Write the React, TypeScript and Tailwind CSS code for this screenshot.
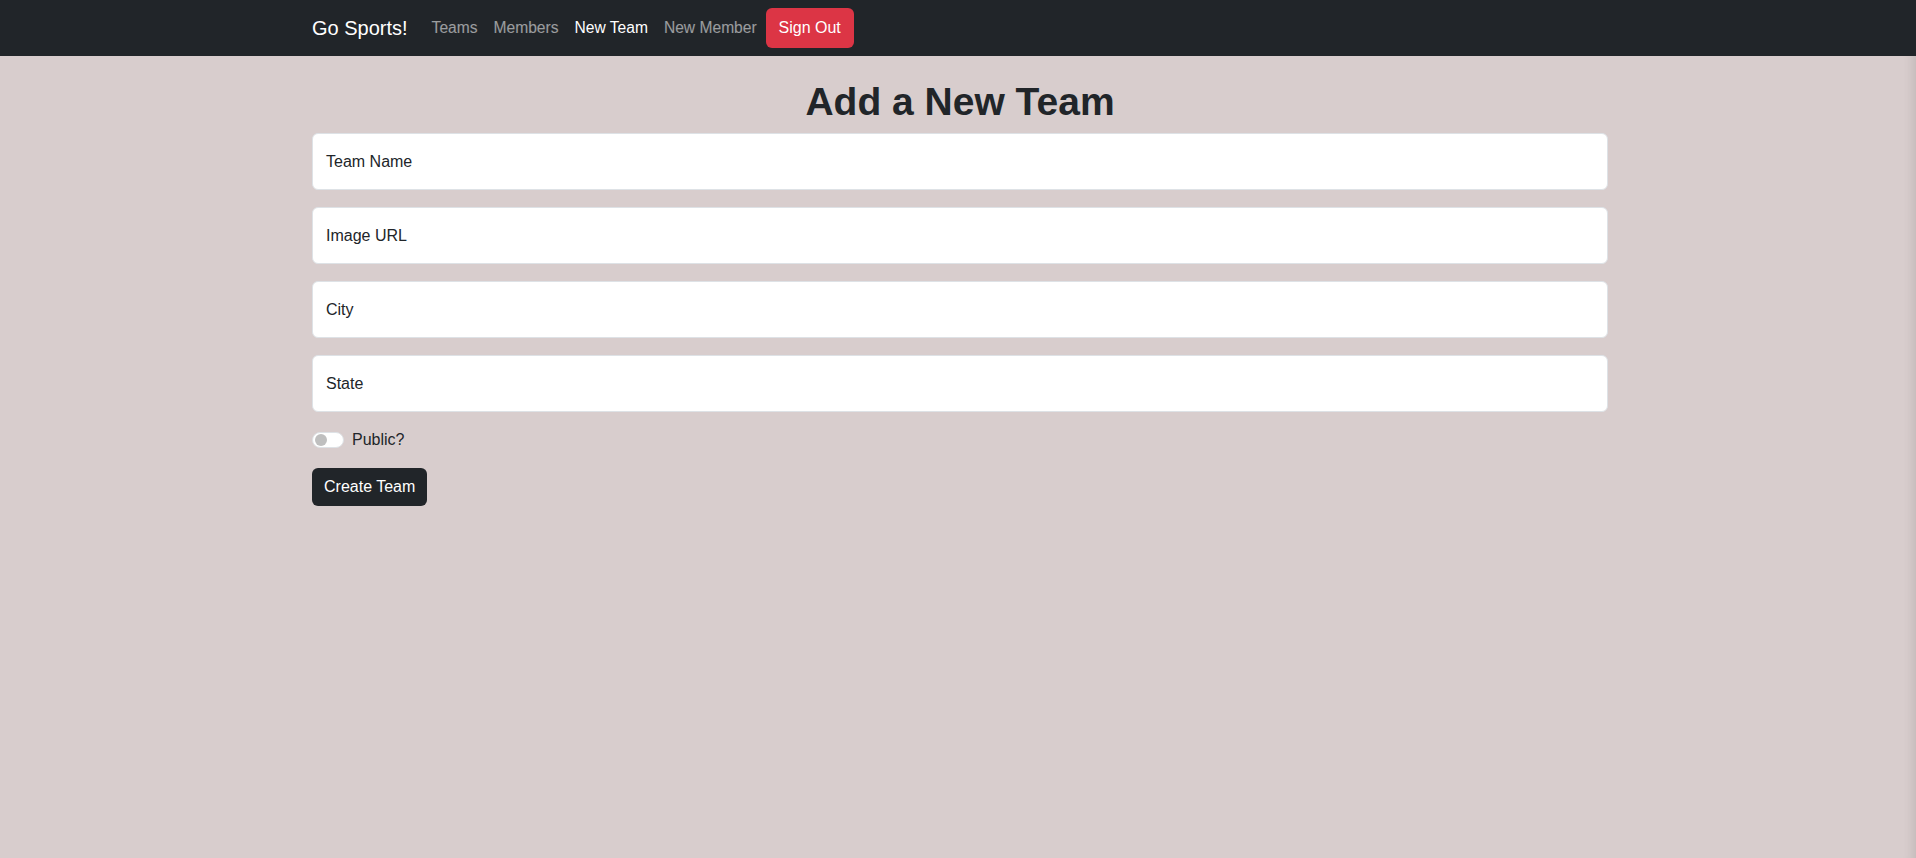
import { useState } from "react";

const font = { fontFamily: '"Segoe UI", "Liberation Sans", Arial, sans-serif' };

export default function App() {
  const [isPublic, setIsPublic] = useState(false);

  return (
    <div className="min-h-[858px] w-full flex flex-col bg-[#d8cdcd]" style={font}>
      {/* navbar */}
      <nav className="h-14 w-full bg-[#212529] flex items-center">
        <div className="w-[1300px] mx-auto pl-1 flex items-center">
          <span className="text-[20px] text-white mr-4 leading-[30px]">Go Sports!</span>
          <a className="px-2 text-[15.6px] text-white/55 leading-6">Teams</a>
          <a className="px-2 text-[15.6px] text-white/55 leading-6">Members</a>
          <a className="px-2 text-[15.6px] text-white leading-6">New Team</a>
          <a className="px-2 text-[15.6px] text-white/55 leading-6">New Member</a>
          <button className="ml-[1px] h-10 w-[88px] rounded-md bg-[#dc3545] text-white text-[16px]">
            Sign Out
          </button>
        </div>
      </nav>

      {/* form */}
      <main className="flex-1 shadow-[inset_-14px_0_12px_-12px_rgba(0,0,0,0.12)]">
        <div className="w-[1300px] mx-auto pl-1 pt-[22px]">
          <h1 className="text-center text-[39px] font-bold leading-[48px] text-[#212529] mb-[7px]">
            Add a New Team
          </h1>
          <div className="flex flex-col gap-[17px]">
            {["Team Name", "Image URL", "City", "State"].map((label) => (
              <div
                key={label}
                className="h-[57px] bg-white border border-[#dee2e6] rounded-md flex items-center px-[13px] text-[16px] text-[#212529]"
              >
                {label}
              </div>
            ))}
          </div>
          <label className="mt-4 flex items-center gap-2 h-6 text-[16px] text-[#212529] cursor-pointer">
            <span
              onClick={() => setIsPublic(!isPublic)}
              className="w-8 h-4 rounded-full bg-white border border-[#dee2e6] flex items-center px-[2px]"
            >
              <span className="w-3 h-3 rounded-full bg-[#bfbfbf]" />
            </span>
            Public?
          </label>
          <button className="mt-4 h-[38px] px-[12px] rounded-md bg-[#212529] text-white text-[16px]">
            Create Team
          </button>
        </div>
      </main>
    </div>
  );
}
